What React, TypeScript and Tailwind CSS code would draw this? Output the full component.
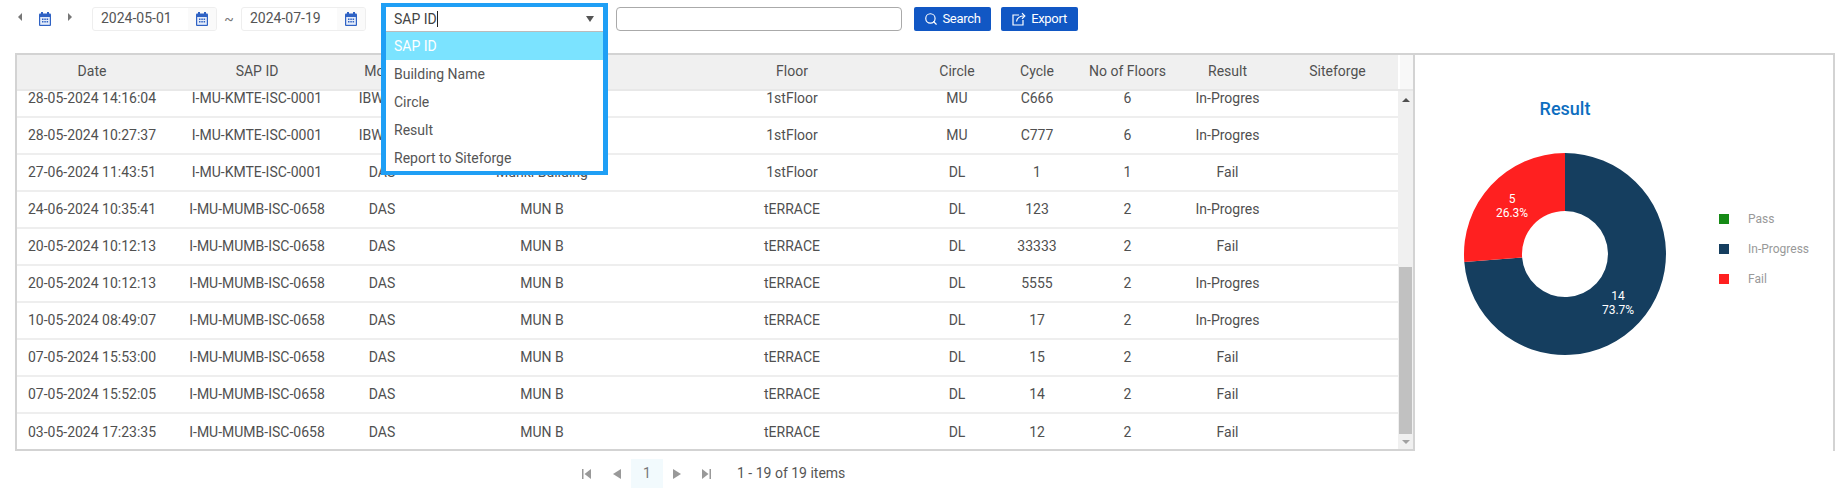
import { Search } from 'lucide-react';

const rows = [
  ['28-05-2024 14:16:04', 'I-MU-KMTE-ISC-0001', 'IBWave', 'Munki Building', '1stFloor', 'MU', 'C666', '6', 'In-Progres'],
  ['28-05-2024 10:27:37', 'I-MU-KMTE-ISC-0001', 'IBWave', 'Munki Building', '1stFloor', 'MU', 'C777', '6', 'In-Progres'],
  ['27-06-2024 11:43:51', 'I-MU-KMTE-ISC-0001', 'DAS', 'Munki Building', '1stFloor', 'DL', '1', '1', 'Fail'],
  ['24-06-2024 10:35:41', 'I-MU-MUMB-ISC-0658', 'DAS', 'MUN B', 'tERRACE', 'DL', '123', '2', 'In-Progres'],
  ['20-05-2024 10:12:13', 'I-MU-MUMB-ISC-0658', 'DAS', 'MUN B', 'tERRACE', 'DL', '33333', '2', 'Fail'],
  ['20-05-2024 10:12:13', 'I-MU-MUMB-ISC-0658', 'DAS', 'MUN B', 'tERRACE', 'DL', '5555', '2', 'In-Progres'],
  ['10-05-2024 08:49:07', 'I-MU-MUMB-ISC-0658', 'DAS', 'MUN B', 'tERRACE', 'DL', '17', '2', 'In-Progres'],
  ['07-05-2024 15:53:00', 'I-MU-MUMB-ISC-0658', 'DAS', 'MUN B', 'tERRACE', 'DL', '15', '2', 'Fail'],
  ['07-05-2024 15:52:05', 'I-MU-MUMB-ISC-0658', 'DAS', 'MUN B', 'tERRACE', 'DL', '14', '2', 'Fail'],
  ['03-05-2024 17:23:35', 'I-MU-MUMB-ISC-0658', 'DAS', 'MUN B', 'tERRACE', 'DL', '12', '2', 'Fail'],
];

const headers = ['Date', 'SAP ID', 'Mode', 'Building Name', 'Floor', 'Circle', 'Cycle', 'No of Floors', 'Result', 'Siteforge'];
const colGrid = 'grid grid-cols-[150px_180px_70px_250px_250px_80px_80px_101px_99px_121px]';
const options = ['Building Name', 'Circle', 'Result', 'Report to Siteforge'];

function CalendarIcon() {
  return (
    <svg width="12" height="14" viewBox="0 0 12 14" className="shrink-0">
      <rect x="2" y="0" width="2" height="3" fill="#2f62c4" />
      <rect x="8" y="0" width="2" height="3" fill="#2f62c4" />
      <rect x="0" y="1.5" width="12" height="12.5" rx="1" fill="#2f62c4" />
      <rect x="1.2" y="5" width="9.6" height="7.8" fill="#e4ecf9" />
      <path d="M3 6.5h1.5v1.5H3zM5.3 6.5h1.5v1.5H5.3zM7.6 6.5h1.5v1.5H7.6zM3 9h1.5v1.5H3zM5.3 9h1.5v1.5H5.3zM7.6 9h1.5v1.5H7.6z" fill="#2f62c4" />
    </svg>
  );
}

function Arrow({ dir, color = '#777', size = 4 }: { dir: 'left' | 'right' | 'up' | 'down'; color?: string; size?: number }) {
  const paths = { left: 'M4 0v8L0 4z', right: 'M0 0v8l4-4z', up: 'M0 4h8L4 0z', down: 'M0 0h8L4 4z' };
  const vertical = dir === 'up' || dir === 'down';
  return (
    <svg width={vertical ? size * 2 : size} height={vertical ? size : size * 2} viewBox={vertical ? '0 0 8 4' : '0 0 4 8'}>
      <path d={paths[dir]} fill={color} />
    </svg>
  );
}

function ExportIcon() {
  return (
    <svg width="14" height="14" viewBox="0 0 14 14" fill="none" stroke="#fff" strokeWidth="1.2">
      <path d="M7 3H1v10h10V8" />
      <path d="M4.5 9.5C5 6.5 7.5 4 12 4" />
      <path d="M10 1.2 12.8 4 10 6.8" />
    </svg>
  );
}

function DateInput({ value, className }: { value: string; className?: string }) {
  return (
    <div className={`flex h-[24px] items-center overflow-hidden rounded-[3px] border border-[#eeeeee] bg-white ${className}`}>
      <span className="flex-1 pb-px pl-[8px] text-[14px] text-[#555]">{value}</span>
      <span className="flex h-full w-[28px] items-center justify-center bg-[#fafafa]">
        <CalendarIcon />
      </span>
    </div>
  );
}

function PageEdge({ flip }: { flip?: boolean }) {
  return (
    <svg width="9" height="10" viewBox="0 0 9 10" className={flip ? 'rotate-180' : ''}>
      <rect x="0" y="0" width="1.5" height="10" fill="#999" />
      <path d="M9 0v10L2.5 5z" fill="#999" />
    </svg>
  );
}

function PageStep({ flip }: { flip?: boolean }) {
  return (
    <svg width="8" height="10" viewBox="0 0 8 10" className={flip ? 'rotate-180' : ''}>
      <path d="M8 0v10L0 5z" fill="#999" />
    </svg>
  );
}

function Donut() {
  return (
    <svg width="204" height="204" viewBox="-102 -102 204 204" className="shrink-0">
      <path d="M0 -101A101 101 0 1 1 -100.7 7.9L-42.9 3.4A43 43 0 1 0 0 -43Z" fill="#153e5f" />
      <path d="M-100.7 7.9A101 101 0 0 1 0 -101L0 -43A43 43 0 0 0 -42.9 3.4Z" fill="#ff2020" />
      <g fill="#fff" fontSize="12" textAnchor="middle" fontFamily="Roboto, sans-serif">
        <text x="-53" y="-51">5</text>
        <text x="-53" y="-37">26.3%</text>
        <text x="53" y="46">14</text>
        <text x="53" y="60">73.7%</text>
      </g>
    </svg>
  );
}

export default function App() {
  return (
    <div className="h-[488px] w-[1846px] overflow-hidden bg-white font-['Roboto',sans-serif] text-[14px] text-[#505050]">
      {/* toolbar */}
      <div className="flex h-[53px] items-start pt-[7px]">
        <div className="ml-[18px] flex h-[24px] w-[54px] items-center justify-between">
          <span className="mb-[5px]"><Arrow dir="left" /></span>
          <CalendarIcon />
          <span className="mb-[5px]"><Arrow dir="right" /></span>
        </div>
        <DateInput value="2024-05-01" className="ml-[20px] w-[125px]" />
        <span className="w-[24px] text-center leading-[24px] text-[#777]">~</span>
        <DateInput value="2024-07-19" className="w-[125px]" />

        <div className="relative ml-[20px] h-[24px] w-[217px]">
          {/* dropdown is highlighted with a thick blue frame in the screenshot */}
          <div className="absolute top-[-4px] left-[-5px] z-10 h-[172px] w-[227px] overflow-hidden border-x-[5px] border-t-[4px] border-b-[4px] border-[#1f9ff5] bg-white">
            <div className="flex h-[25px] items-center justify-between border-b border-[#bbbbbb] pr-[9px] pl-[8px] text-[#444]">
              <span className="flex items-center">
                SAP ID<span className="h-[16px] w-px bg-[#222]" />
              </span>
              <svg width="8" height="6" viewBox="0 0 8 6">
                <path d="M0 0h8L4 6z" fill="#555" />
              </svg>
            </div>
            <div className="flex h-[28px] items-center bg-[#7be3ff] pl-[8px] text-white">SAP ID</div>
            {options.map((option) => (
              <div key={option} className="flex h-[28px] items-center pl-[8px] text-[#555]">
                {option}
              </div>
            ))}
          </div>
        </div>

        <input className="ml-[13px] h-[24px] w-[286px] rounded-[4px] border border-[#aaaaaa] bg-white outline-none" />
        <button className="ml-[12px] flex h-[24px] w-[77px] items-center justify-center gap-[4px] rounded-[2px] bg-[#1157c4] text-[13px] tracking-[-0.3px] text-white">
          <Search size={14} strokeWidth={2} />
          Search
        </button>
        <button className="ml-[10px] flex h-[24px] w-[77px] items-center justify-center gap-[5px] rounded-[2px] bg-[#1157c4] text-[13px] tracking-[-0.3px] text-white">
          <ExportIcon />
          Export
        </button>
      </div>

      <div className="ml-[15px] flex h-[398px] w-[1820px]">
        {/* table */}
        <div className="flex w-[1400px] flex-col border-2 border-[#d3d3d3]">
          <div className="flex h-[36px] shrink-0 border-b-2 border-[#e8e8e8]">
            <div className={`${colGrid} flex-1 bg-[#f0f0f0]`}>
              {headers.map((header) => (
                <div key={header} className="flex items-center justify-center pb-px">
                  {header}
                </div>
              ))}
            </div>
            <div className="ml-[2px] w-[15px] bg-[#f8f8f8]" />
          </div>
          <div className="flex min-h-0 flex-1">
            <div className="min-h-0 flex-1 overflow-hidden">
              <div className="-mt-[10px]">
                {rows.map((row, i) => (
                  <div key={i} className={`${colGrid} h-[37px] border-b-2 border-[#eeeeee] last:border-b-0`}>
                    {headers.map((header, j) => (
                      <div key={header} className="flex items-center justify-center whitespace-nowrap">
                        {row[j] ?? ''}
                      </div>
                    ))}
                  </div>
                ))}
              </div>
            </div>
            {/* scrollbar */}
            <div className="flex w-[15px] flex-col items-center bg-[#f0f0f0]">
              <div className="mt-[7px] flex-none">
                <Arrow dir="up" color="#505050" size={4} />
              </div>
              <div className="mt-[165px] h-[167px] w-[13px] bg-[#c1c1c1]" />
              <div className="mt-[6px] flex-none">
                <Arrow dir="down" color="#a0a0a0" size={4} />
              </div>
            </div>
          </div>
        </div>

        {/* chart */}
        <div className="relative flex-1 border-t-2 border-r-2 border-[#d3d3d3]">
          <div className="absolute top-[42px] left-[50px] w-[200px] text-center text-[18px] leading-[24px] font-medium text-[#0d6ec0]">
            Result
          </div>
          <div className="absolute top-[97px] left-[48px]">
            <Donut />
          </div>
          <div className="absolute top-[158px] left-[304px] flex flex-col gap-[18px] text-[12px] text-[#999]">
            {[
              ['Pass', 'bg-[#168a16]'],
              ['In-Progress', 'bg-[#153e5f]'],
              ['Fail', 'bg-[#ff2020]'],
            ].map(([label, color]) => (
              <div key={label} className="flex h-[12px] items-center gap-[19px]">
                <span className={`h-[10px] w-[10px] ${color}`} />
                {label}
              </div>
            ))}
          </div>
        </div>
      </div>

      {/* pager */}
      <div className="mt-[8px] ml-[582px] flex h-[29px] items-center">
        <PageEdge />
        <div className="ml-[22px] flex"><PageStep /></div>
        <div className="ml-[10px] flex h-[29px] w-[32px] items-center justify-center bg-[#f2fafd] text-[#777]">1</div>
        <div className="ml-[10px] flex"><PageStep flip /></div>
        <div className="ml-[21px] flex"><PageEdge flip /></div>
        <div className="ml-[26px] text-[#555]">1 - 19 of 19 items</div>
      </div>
    </div>
  );
}
